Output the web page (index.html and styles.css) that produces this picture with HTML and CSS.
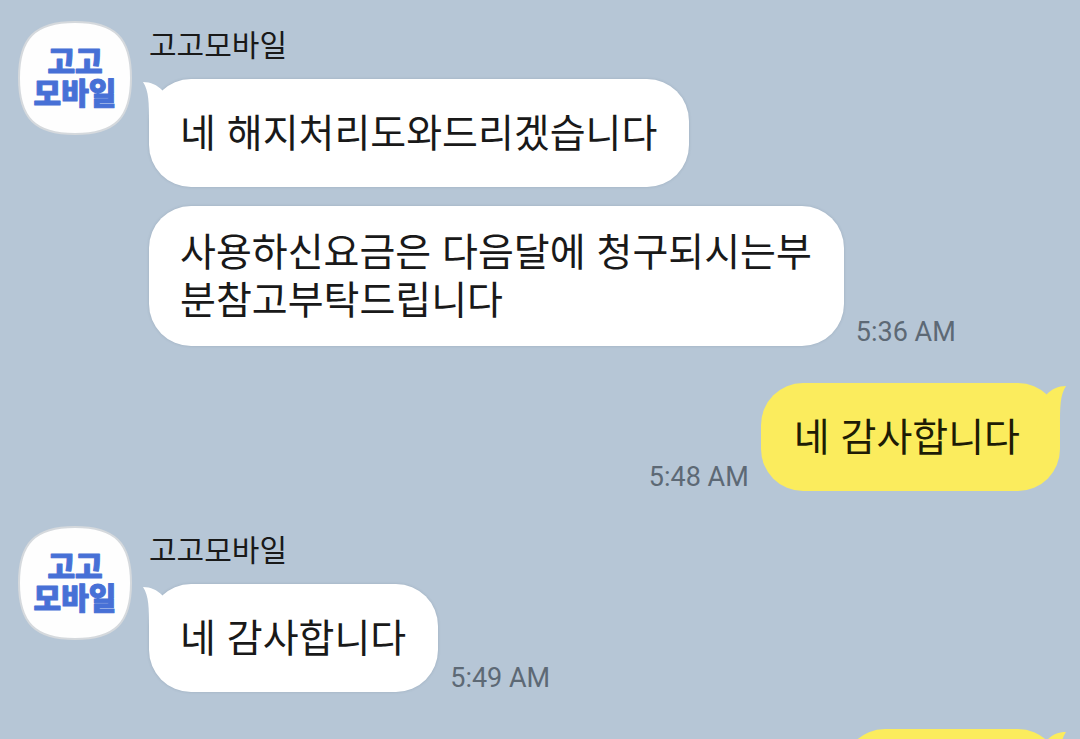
FILE: index.html
```html
<!DOCTYPE html>
<html lang="ko">
<head>
  <meta charset="UTF-8" />
  <meta name="viewport" content="width=device-width, initial-scale=1.0"/>
  <title>고고모바일</title>
  <link rel="stylesheet" href="styles.css">
</head>
<body>
  <main class="chat">
    <section class="message theirs">
      <svg class="avatar" viewBox="0 0 114 114">
        <path class="avatar-shape" d="M57 1C97 1 113 17 113 57S97 113 57 113S1 97 1 57S17 1 57 1Z"/>
        <text x="57" y="51">고고</text>
        <text x="57" y="83">모바일</text>
      </svg>
      <div class="content">
        <h2 class="name">고고모바일</h2>
        <div class="line">
          <div class="bubble">
            <svg class="tail" viewBox="0 0 30 44"><path d="M0 3C8 3 14 6 19 11L30 44H6C6 24 6 12 0 3Z"/></svg>
            <p>네 해지처리도와드리겠습니다</p>
          </div>
        </div>
        <div class="line">
          <div class="bubble">
            <p>사용하신요금은 다음달에 청구되시는부<br>분참고부탁드립니다</p>
          </div>
          <time>5:36 AM</time>
        </div>
      </div>
    </section>

    <section class="message mine">
      <div class="line">
        <time>5:48 AM</time>
        <div class="bubble">
          <svg class="tail" viewBox="0 0 30 44"><path d="M0 3C8 3 14 6 19 11L30 44H6C6 24 6 12 0 3Z"/></svg>
          <p>네 감사합니다</p>
        </div>
      </div>
    </section>

    <section class="message theirs">
      <svg class="avatar" viewBox="0 0 114 114">
        <path class="avatar-shape" d="M57 1C97 1 113 17 113 57S97 113 57 113S1 97 1 57S17 1 57 1Z"/>
        <text x="57" y="51">고고</text>
        <text x="57" y="83">모바일</text>
      </svg>
      <div class="content">
        <h2 class="name">고고모바일</h2>
        <div class="line">
          <div class="bubble">
            <svg class="tail" viewBox="0 0 30 44"><path d="M0 3C8 3 14 6 19 11L30 44H6C6 24 6 12 0 3Z"/></svg>
            <p>네 감사합니다</p>
          </div>
          <time>5:49 AM</time>
        </div>
      </div>
    </section>

    <section class="message mine">
      <div class="line">
        <div class="bubble empty">
          <svg class="tail" viewBox="0 0 30 44"><path d="M0 3C8 3 14 6 19 11L30 44H6C6 24 6 12 0 3Z"/></svg>
        </div>
      </div>
    </section>
  </main>
</body>
</html>
```
FILE: styles.css
```css
* {
  box-sizing: border-box;
}

body {
  margin: 0;
  height: 100vh;
  overflow: hidden;
  background: #b6c6d6;
  color: #191919;
  font-family: "Noto Sans CJK KR", sans-serif;
}

h2, p {
  margin: 0;
  font-weight: normal;
}

.chat {
  display: flex;
  flex-direction: column;
  height: 100vh;
  overflow: hidden;
  padding: 21px 0 0 18px;
}

.message {
  display: flex;
  flex: none;
}

.theirs {
  gap: 17px;
}

.mine {
  justify-content: flex-end;
  margin-top: 37px;
  padding-right: 20px;
}

.mine + .theirs {
  margin-top: 35px;
}

/* avatar */
.avatar {
  flex: none;
  width: 114px;
  height: 114px;
}

.avatar-shape {
  fill: #fefefe;
  stroke: #d5d9dd;
  stroke-width: 2;
}

.avatar text {
  fill: #4770d6;
  stroke: #4770d6;
  stroke-width: 1;
  stroke-linejoin: round;
  font-size: 30px;
  font-weight: 900;
  text-anchor: middle;
}

/* bubbles */
.content {
  flex: 1;
  min-width: 0;
}

.name {
  height: 58px;
  font-size: 30px;
  line-height: 44px;
}

.line {
  display: flex;
  align-items: flex-end;
  gap: 12px;
}

.line + .line {
  margin-top: 19px;
}

.bubble {
  position: relative;
  display: flex;
  align-items: center;
  min-height: 108px;
  padding: 19px 32px 25px 31px;
  border-radius: 42px;
  background: #fff;
  font-size: 39px;
  line-height: 48px;
  word-break: break-all;
  box-shadow: 0 0 3px rgba(60, 80, 100, 0.2);
}

.mine .bubble {
  padding: 19px 40px 25px 33px;
  background: #fbec5d;
  color: #1e1c05;
  box-shadow: none;
}

.mine .empty {
  width: 217px;
}

.tail {
  position: absolute;
  top: 0;
  left: -6px;
  width: 30px;
  height: 44px;
  fill: #fff;
}

.mine .tail {
  left: auto;
  right: -6px;
  transform: scaleX(-1);
  fill: #fbec5d;
}

time {
  color: #5d6975;
  font-family: Roboto, sans-serif;
  font-size: 27px;
  line-height: 28px;
  white-space: nowrap;
}
```
